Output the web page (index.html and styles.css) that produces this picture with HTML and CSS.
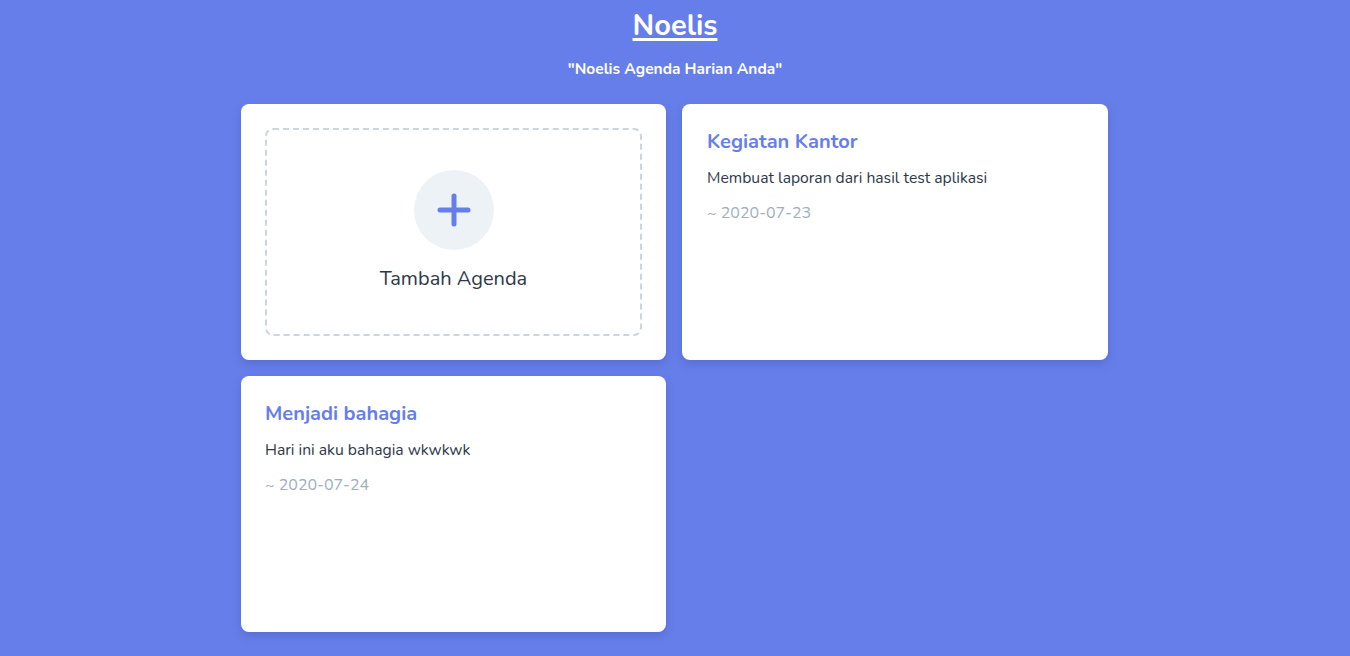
FILE: index.html
```html
<!DOCTYPE html>
<html lang="id">
<head>
<meta charset="utf-8">
<title>Noelis</title>
<link rel="stylesheet" href="styles.css">
</head>
<body>
<header class="header">
  <h1 class="brand">Noelis</h1>
  <p class="tagline">"Noelis Agenda Harian Anda"</p>
</header>
<main class="grid">
  <div class="card">
    <div class="add-box">
      <div class="add-icon">
        <svg width="34" height="34" viewBox="0 0 34 34"><path d="M17 3v28M3 17h28" stroke="#667eea" stroke-width="5" stroke-linecap="round" fill="none"/></svg>
      </div>
      <div class="add-label">Tambah Agenda</div>
    </div>
  </div>
  <div class="card">
    <h2 class="card-title">Kegiatan Kantor</h2>
    <p class="card-desc">Membuat laporan dari hasil test aplikasi</p>
    <p class="card-date">~ 2020-07-23</p>
  </div>
  <div class="card">
    <h2 class="card-title">Menjadi bahagia</h2>
    <p class="card-desc">Hari ini aku bahagia wkwkwk</p>
    <p class="card-date">~ 2020-07-24</p>
  </div>
</main>
</body>
</html>
```
FILE: styles.css
```css
html, body {
  margin: 0;
  padding: 0;
}
body {
  background: #667eea;
  font-family: "Nunito", "Lato", "Noto Sans", sans-serif;
  color: #2d3748;
  height: 656px;
  overflow: hidden;
}
.header {
  text-align: center;
  color: #fff;
  padding-top: 6px;
}
.brand {
  margin: 0;
  font-size: 29px;
  line-height: 40px;
  font-weight: 700;
  text-decoration: underline;
  text-decoration-thickness: 3px;
  text-underline-offset: 3px;
}
.tagline {
  margin: 11px 0 0;
  font-size: 15.5px;
  font-weight: 700;
  line-height: 24px;
}
.grid {
  display: grid;
  grid-template-columns: 425px 426px;
  grid-auto-rows: 256px;
  column-gap: 16px;
  row-gap: 16px;
  justify-content: center;
  margin-top: 23px;
  padding-right: 1px;
}
.card {
  background: #fff;
  border-radius: 8px;
  padding: 24px 24px 24px 25px;
  box-shadow: 0 4px 10px rgba(40, 50, 120, 0.2);
  box-sizing: border-box;
}
.card-add {
  padding: 24px;
}
.grid > .card:first-child,
.grid > .card:nth-child(3) {
  padding-left: 24px;
}
.add-box {
  height: 100%;
  box-sizing: border-box;
  border: 2px dashed #cbd5e0;
  border-radius: 8px;
  display: flex;
  flex-direction: column;
  align-items: center;
  justify-content: center;
}
.add-icon {
  width: 80px;
  height: 80px;
  border-radius: 50%;
  background: #edf2f7;
  display: flex;
  align-items: center;
  justify-content: center;
  margin-top: -3px;
}
.add-label {
  margin-top: 17px;
  font-size: 20px;
  line-height: 24px;
  color: #2d3748;
}
.card-title {
  margin: 0;
  font-size: 20px;
  line-height: 28px;
  font-weight: 700;
  color: #667eea;
}
.card-desc {
  margin: 10px 0 0;
  font-size: 15.7px;
  line-height: 24px;
  color: #2d3748;
}
.card-date {
  margin: 11px 0 0;
  font-size: 16px;
  line-height: 24px;
  color: #a0aec0;
}
```
